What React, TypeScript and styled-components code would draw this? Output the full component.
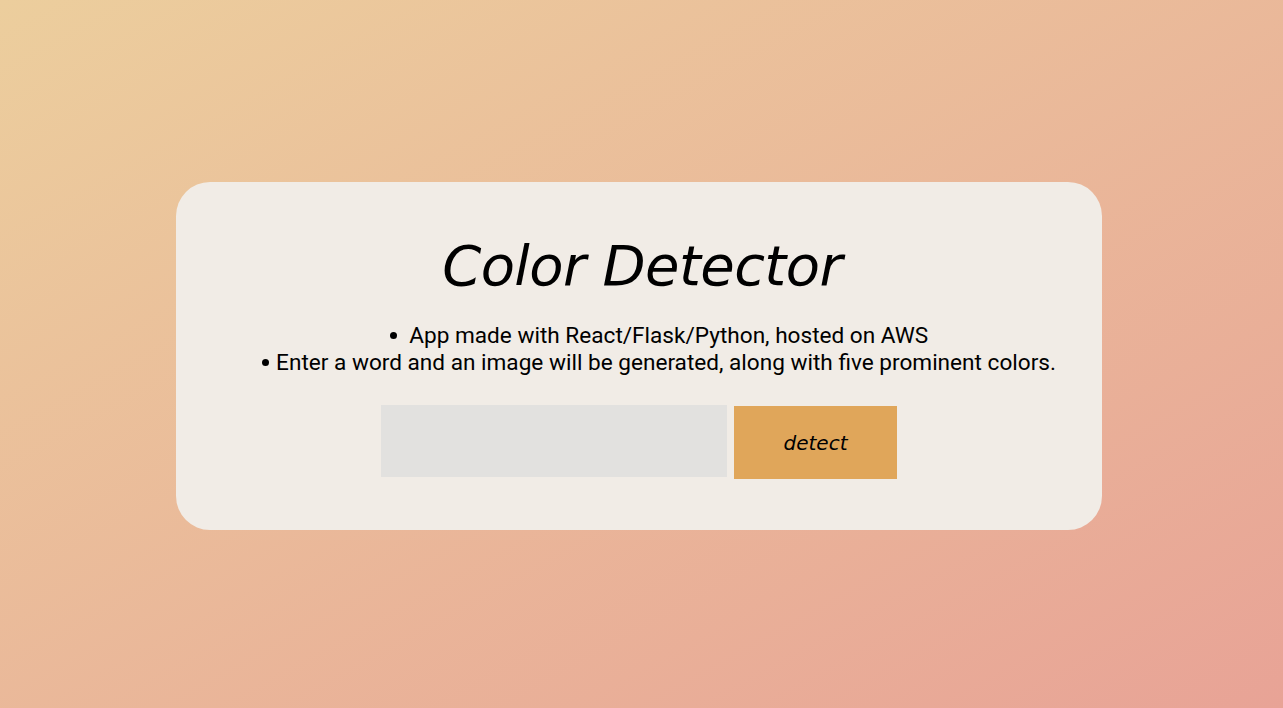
import React from "react";
import styled, { createGlobalStyle } from "styled-components";

const Global = createGlobalStyle`
  html, body { margin: 0; padding: 0; }
  body {
    min-height: 100vh;
    background: linear-gradient(to bottom right, #ecce9d, #e8a396);
    font-family: Roboto, "Liberation Sans", sans-serif;
  }
`;

const Page = styled.main`
  min-height: 100vh;
  display: flex;
  align-items: center;
  justify-content: center;
`;

const Card = styled.section`
  box-sizing: border-box;
  width: 926px;
  height: 348px;
  background: #f1ece6;
  border-radius: 34px;
  display: flex;
  flex-direction: column;
  align-items: center;
  padding-top: 42px;
  margin-left: -5px;
  margin-top: 4px;
`;

const Title = styled.h1`
  margin: 0 0 0 6px;
  font-family: "DejaVu Sans", sans-serif;
  font-style: italic;
  font-weight: 400;
  font-size: 56px;
  line-height: 84px;
  color: #000;
  letter-spacing: -0.6px;
`;

const List = styled.ul`
  margin: 14px 0 0;
  padding: 0 0 0 40px;
  list-style: none;
  text-align: center;
  font-size: 22.6px;
  line-height: 27px;
  color: #000;
`;

const Item = styled.li`
  &::before {
    content: "";
    display: inline-block;
    width: 7px;
    height: 7px;
    border-radius: 50%;
    background: #000;
    margin-right: 7px;
    vertical-align: 4px;
  }
`;

const Form = styled.form`
  display: flex;
  align-items: flex-start;
  gap: 7px;
  margin-top: 29px;
`;

const Input = styled.input`
  box-sizing: border-box;
  width: 346px;
  height: 72px;
  border: none;
  background: #e2e1df;
  outline: none;
`;

const Button = styled.button`
  box-sizing: border-box;
  width: 163px;
  height: 73px;
  margin-top: 1px;
  border: none;
  background: #e0a65a;
  font-family: "DejaVu Sans", sans-serif;
  font-style: italic;
  font-size: 20px;
  color: #000;
`;

export default function App() {
  return (
    <>
      <Global />
      <Page>
        <Card>
          <Title>Color Detector</Title>
          <List>
            <Item>{"\u00a0"}App made with React/Flask/Python, hosted on AWS</Item>
            <Item>Enter a word and an image will be generated, along with five prominent colors.</Item>
          </List>
          <Form onSubmit={(e) => e.preventDefault()}>
            <Input type="text" />
            <Button type="submit">detect</Button>
          </Form>
        </Card>
      </Page>
    </>
  );
}
